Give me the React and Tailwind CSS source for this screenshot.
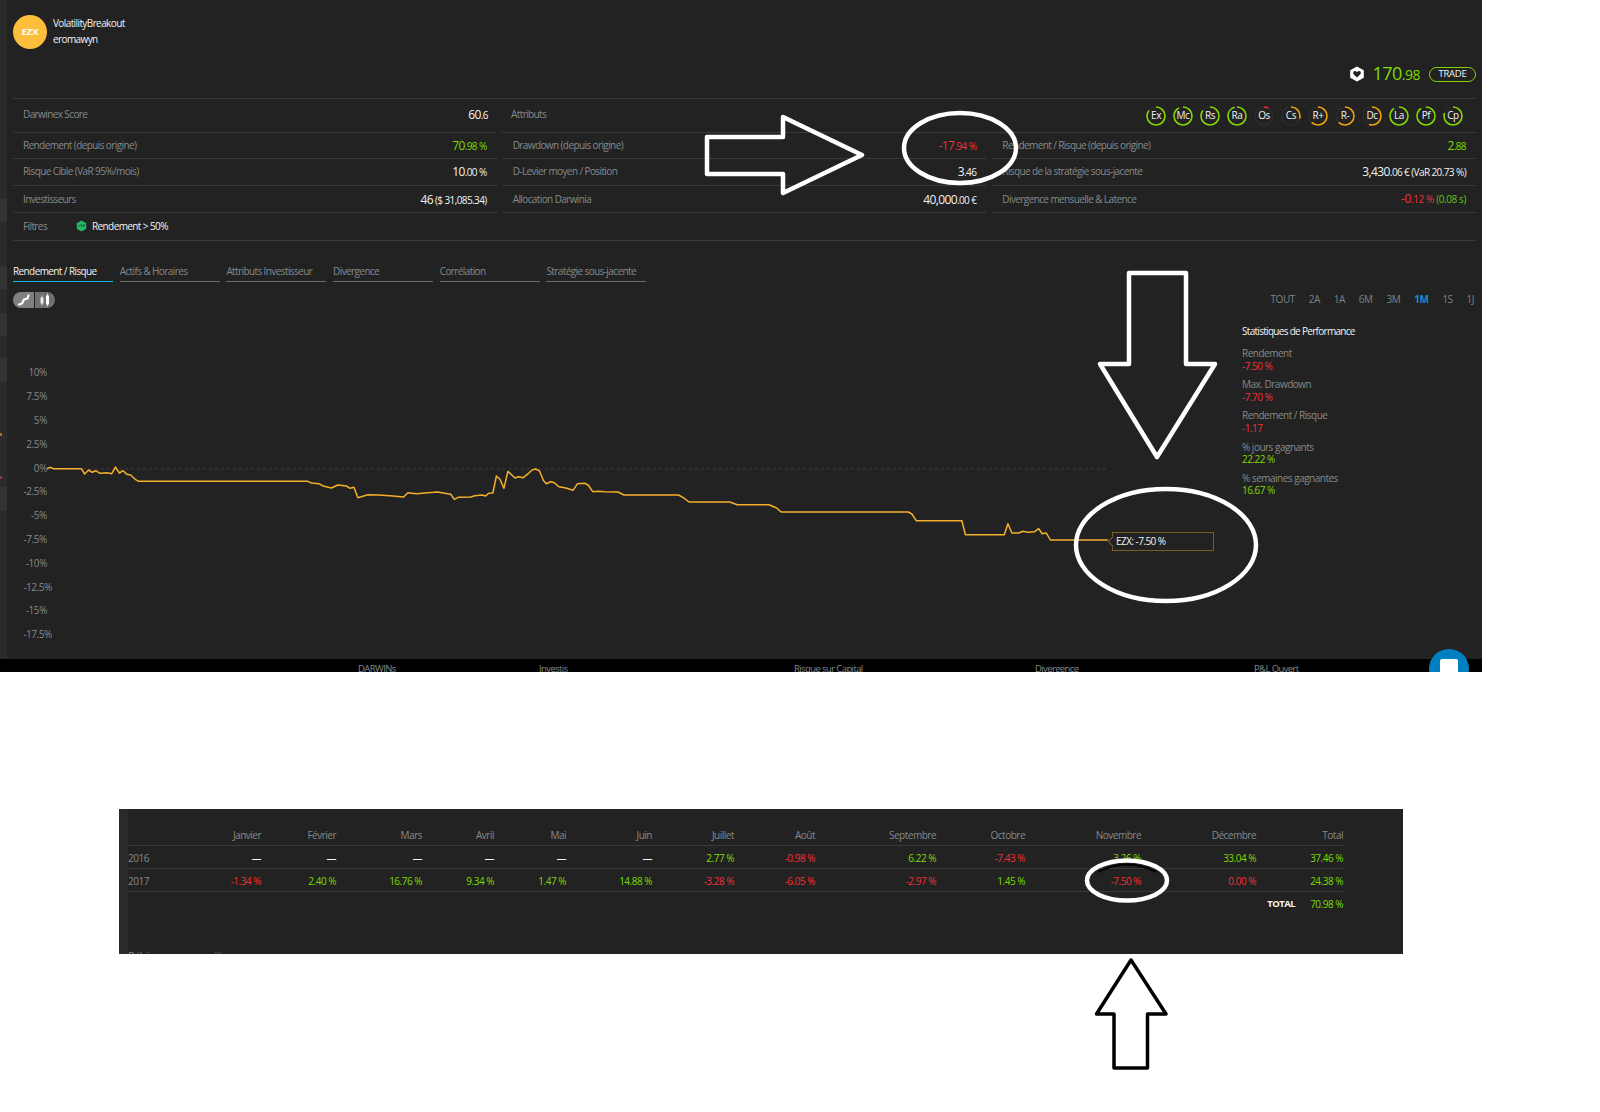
const green = 'text-[#7cdb00]';
const red = 'text-[#f33036]';

const badges = [
  ['Ex', 0.85, '#84d800'], ['Mc', 0.92, '#84d800'], ['Rs', 0.85, '#84d800'], ['Ra', 0.95, '#84d800'],
  ['Os', 0.08, '#ee2a30'], ['Cs', 0.3, '#f0a30a'], ['R+', 0.62, '#f0a30a'], ['R-', 0.62, '#f0a30a'],
  ['Dc', 0.55, '#f0a30a'], ['La', 0.9, '#84d800'], ['Pf', 0.9, '#84d800'], ['Cp', 0.8, '#84d800'],
];

const tabs = ['Rendement / Risque', 'Actifs & Horaires', 'Attributs Investisseur', 'Divergence', 'Corrélation', 'Stratégie sous-jacente'];
const ranges = ['TOUT', '2A', '1A', '6M', '3M', '1M', '1S', '1J'];
const axis = ['10%', '7.5%', '5%', '2.5%', '0%', '-2.5%', '-5%', '-7.5%', '-10%', '-12.5%', '-15%', '-17.5%'];

const stats = [
  ['Rendement', '-7.50 %', red],
  ['Max. Drawdown', '-7.70 %', red],
  ['Rendement / Risque', '-1.17', red],
  ['% jours gagnants', '22.22 %', green],
  ['% semaines gagnantes', '16.67 %', green],
];

const months = ['Janvier', 'Février', 'Mars', 'Avril', 'Mai', 'Juin', 'Juillet', 'Août', 'Septembre', 'Octobre', 'Novembre', 'Décembre', 'Total'];
const years = [
  ['2016', ['—', '—', '—', '—', '—', '—', '2.77 %', '-0.98 %', '6.22 %', '-7.43 %', '3.26 %', '33.04 %', '37.46 %']],
  ['2017', ['-1.34 %', '2.40 %', '16.76 %', '9.34 %', '1.47 %', '14.88 %', '-3.28 %', '-6.05 %', '-2.97 %', '1.45 %', '-7.50 %', '0.00 %', '24.38 %']],
];

// traced from the reference, in page pixels
const part1 = [[130,357],[140,352],[150,356],[228,356],[237,372],[248,360],[258,367],[268,362],[280,370],[300,368],[313,371],[323,351],[334,369],[345,362],[355,373],[366,375],[380,389],[388,394],[862,394],[872,399],[893,401],[905,408],[928,414],[946,405],[970,408],[980,415],[991,412],[1002,443],[1030,434],[1060,435],[1100,438],[1130,441],[1142,428],[1165,431],[1190,429],[1225,426],[1262,433],[1272,448],[1283,442],[1318,441],[1330,437],[1350,435],[1360,438],[1368,430],[1380,429],[1390,378],[1400,388],[1411,415],[1422,364],[1442,384],[1452,380],[1465,383],[1480,370],[1490,360],[1500,357],[1510,362]]
  .map(([x, y]) => [x / 2.8, 350 + y / 3]);
const part2 = [[0,127],[8,152],[14,161],[24,155],[32,158],[42,170],[58,174],[74,181],[84,161],[100,160],[108,165],[118,185],[130,184],[145,185],[175,186],[188,195],[310,195],[320,202],[334,216],[425,216],[442,224],[513,224],[530,234],[540,246],[825,246],[833,252],[843,272],[945,272],[953,314],[1040,314],[1048,281],[1057,309],[1072,309],[1082,304],[1092,307],[1108,305],[1117,296],[1125,311],[1134,309],[1143,330],[1272,330]]
  .map(([x, y]) => [540 + x / 2.24, 430 + y / 3]);
const linePoints = [...part1, ...part2].map(([x, y]) => `${x.toFixed(1)},${y.toFixed(1)}`).join(' ');

const Label = ({ children }) => <span className="text-[10px] leading-[14px] tracking-[-0.6px] text-[#858a8c]">{children}</span>;

const Val = ({ whole, rest, color = 'text-[#f2f2f2]' }) => (
  <span className={`leading-[14px] tracking-[-0.6px] ${color}`}>
    <span className="text-[12px]">{whole}</span>
    <span className="text-[10px]">{rest}</span>
  </span>
);

const Cell = ({ label, value, h }) => (
  <div className={`flex items-center justify-between border-b border-[#3a3a3a] px-[10px] ${h}`}>
    <Label>{label}</Label>
    {value}
  </div>
);

const Badge = ({ name, pct, color }) => {
  const c = 2 * Math.PI * 9;
  return (
    <div className="relative flex h-[20px] w-[20px] items-center justify-center">
      <svg viewBox="0 0 20 20" className="absolute inset-0 h-[20px] w-[20px] -rotate-90">
        <circle cx="10" cy="10" r="9" fill="none" stroke="#2e2e2e" strokeWidth="1.2" />
        <circle cx="10" cy="10" r="9" fill="none" stroke={color} strokeWidth="1.6" strokeDasharray={`${pct * c} ${c}`} />
      </svg>
      <span className="text-[10px] tracking-[-0.4px] text-[#f2f2f2]">{name}</span>
    </div>
  );
};

const valueColor = (v) => (v === '—' ? 'text-[#f2f2f2]' : v.startsWith('-') || v === '0.00 %' ? red : green);

const TableRow = ({ cells, first }) => (
  <div className="grid h-[23px] grid-cols-[60px_73px_75px_86px_72px_72px_86px_82px_81px_121px_89px_116px_115px_87px] items-center border-b border-[#3a3a3a] pt-[2px] text-[10px] tracking-[-0.5px]">
    <span className="text-[#858a8c]">{first}</span>
    {cells.map((v, i) => (
      <span key={i} className={`text-right ${valueColor(v)}`}>{v}</span>
    ))}
  </div>
);

export default function App() {
  return (
    <div className="relative h-[1112px] w-[1600px] overflow-hidden bg-white font-['Open_Sans',sans-serif]">
      {/* Top panel */}
      <div className="relative flex h-[672px] w-[1482px] flex-col overflow-hidden bg-[#222222]">
        <div className="flex h-[659px]">
          {/* Sidebar strip */}
          <div className="flex w-[7px] flex-col bg-[#2a2a2a]">
            <div className="h-[199px]" />
            <div className="h-[23px] bg-[#333333]" />
            <div className="h-[44px]" />
            <div className="h-[23px] bg-[#333333]" />
            <div className="h-[24px]" />
            <div className="h-[23px] bg-[#333333]" />
            <div className="h-[22px]" />
            <div className="h-[24px] bg-[#333333]" />
            <div className="h-[51px]" />
            <div className="h-[3px] w-[2px] bg-[#a8742a]" />
            <div className="h-[40px]" />
            <div className="h-[3px] w-[2px] bg-[#8a3a3a]" />
            <div className="h-[8px]" />
            <div className="h-[24px] bg-[#333333]" />
          </div>

          <div className="ml-[6px] flex w-[1463px] flex-col">
            {/* Header */}
            <div className="flex h-[99px] justify-between border-b border-[#3a3a3a]">
              <div className="flex items-start gap-[6px] pt-[15px]">
                <div className="flex h-[34px] w-[34px] items-center justify-center rounded-full bg-[#fdbe3c] text-[9.5px] font-bold text-white">EZX</div>
                <div className="flex flex-col text-[10px] leading-[16px] tracking-[-0.6px] text-[#f2f2f2]">
                  <span>VolatilityBreakout</span>
                  <span>eromawyn</span>
                </div>
              </div>
              <div className="mt-[66px] flex h-[16px] items-center">
                <svg viewBox="0 0 16 16" className="mr-[7px] h-[16px] w-[16px]">
                  <path d="M8 0.5 14.8 4.3 14.8 11.7 8 15.5 1.2 11.7 1.2 4.3Z" fill="#ffffff" />
                  <path d="M8 11.6 4.6 8.2C3.4 6.8 4.6 4.9 6.2 5.1 7 5.2 7.6 5.7 8 6.3 8.4 5.7 9 5.2 9.8 5.1 11.4 4.9 12.6 6.8 11.4 8.2Z" fill="#222222" />
                </svg>
                <span className={`mr-[9px] leading-[16px] tracking-[-0.5px] ${green}`}>
                  <span className="text-[18px]">170</span>
                  <span className="text-[14px]">.98</span>
                </span>
                <div className="flex h-[15px] w-[47px] items-center justify-center rounded-full border border-[#84d800] text-[9.5px] tracking-[-0.3px] text-[#f2f2f2]">TRADE</div>
              </div>
            </div>

            {/* Score row */}
            <div className="flex gap-[5px]">
              <div className="flex h-[34px] w-[483px] items-center justify-between border-b border-[#3a3a3a] pb-[3px] pl-[10px] pr-[8px]">
                <Label>Darwinex Score</Label>
                <Val whole="60" rest=".6" />
              </div>
              <div className="flex h-[34px] flex-1 items-center justify-between border-b border-[#3a3a3a] pl-[10px] pr-[13px]">
                <span className="-mt-[3px] flex"><Label>Attributs</Label></span>
                <div className="flex gap-[7px]">
                  {badges.map(([name, pct, color]) => (
                    <Badge key={name} name={name} pct={pct} color={color} />
                  ))}
                </div>
              </div>
            </div>

            {/* Metrics */}
            <div className="grid grid-cols-3 gap-x-[6px]">
              <Cell h="h-[26px] pb-[2px]" label="Rendement (depuis origine)" value={<Val whole="70" rest=".98 %" color={green} />} />
              <Cell h="h-[26px] pb-[2px]" label="Drawdown (depuis origine)" value={<Val whole="-17" rest=".94 %" color={red} />} />
              <Cell h="h-[26px] pb-[2px]" label="Rendement / Risque (depuis origine)" value={<Val whole="2" rest=".88" color={green} />} />
              <Cell h="h-[27px] pb-[2px]" label="Risque Cible (VaR 95%/mois)" value={<Val whole="10" rest=".00 %" />} />
              <Cell h="h-[27px] pb-[2px]" label="D-Levier moyen / Position" value={<Val whole="3" rest=".46" />} />
              <Cell h="h-[27px] pb-[2px]" label="Risque de la stratégie sous-jacente" value={<Val whole="3,430" rest=".06 € (VaR 20.73 %)" />} />
              <Cell h="h-[27px] pb-[1px]" label="Investisseurs" value={<Val whole="46" rest=" ($ 31,085.34)" />} />
              <Cell h="h-[27px] pb-[1px]" label="Allocation Darwinia" value={<Val whole="40,000" rest=".00 €" />} />
              <Cell
                h="h-[27px] pb-[1px]"
                label="Divergence mensuelle & Latence"
                value={
                  <span className="text-[10px] leading-[14px] tracking-[-0.4px]">
                    <span className={red}><span className="text-[12px]">-0</span>.12 %</span>{' '}
                    <span className="text-[#5fc21a]">(0.08 s)</span>
                  </span>
                }
              />
            </div>

            {/* Filters */}
            <div className="flex h-[28px] items-center border-b border-[#3a3a3a] pb-[2px] pl-[10px]">
              <div className="flex w-[53px]"><Label>Filtres</Label></div>
              <svg viewBox="0 0 12 12" className="mr-[5px] h-[12px] w-[11px]">
                <path d="M6 0 11.2 3 11.2 9 6 12 .8 9 .8 3Z" fill="#27b765" />
                <text x="6" y="7.6" textAnchor="middle" fontSize="4.4" fontWeight="700" fill="#0d5c30">&gt;50</text>
              </svg>
              <span className="text-[10px] leading-[14px] tracking-[-0.6px] text-[#f2f2f2]">Rendement &gt; 50%</span>
            </div>

            {/* Tabs */}
            <div className="mt-[22px] flex gap-[6.7px]">
              {tabs.map((t, i) => (
                <div
                  key={t}
                  className={`h-[19px] w-[100px] whitespace-nowrap border-b text-[10px] leading-[17px] tracking-[-0.6px] ${
                    i === 0 ? 'border-[#12b5ea] text-[#f2f2f2]' : 'border-[#6a6a6a] text-[#858a8c]'
                  }`}
                >
                  {t}
                </div>
              ))}
            </div>

            {/* Chart toolbar */}
            <div className="mt-[10px] flex h-[16px] items-center justify-between">
              <div className="flex h-[16px] w-[42px] overflow-hidden rounded-full">
                <div className="flex w-[21px] items-center justify-center bg-[#808080]">
                  <svg viewBox="0 0 14 12" className="h-[12px] w-[14px]">
                    <path d="M2 10.5 5 9.5 7 5.5 10.5 4.5 11.5 1.5" fill="none" stroke="#fff" strokeWidth="2.2" strokeLinecap="round" strokeLinejoin="round" />
                  </svg>
                </div>
                <div className="ml-[1px] flex flex-1 items-center justify-center bg-[#707070]">
                  <svg viewBox="0 0 14 14" className="h-[14px] w-[14px]">
                    <path d="M4 2.5V12.5M9.5 .5V13.5" stroke="#d8d8d8" strokeWidth="1" />
                    <rect x="2.5" y="4.5" width="3" height="6" fill="#e8e8e8" />
                    <rect x="8" y="2.5" width="3" height="9" fill="#ffffff" />
                  </svg>
                </div>
              </div>
              <div className="mb-[2px] mr-[2px] flex gap-[14px] text-[10px] leading-[14px] tracking-[-0.5px] text-[#7f8385]">
                {ranges.map((r) => (
                  <span key={r} className={r === '1M' ? 'font-bold text-[#0f8fd8]' : ''}>{r}</span>
                ))}
              </div>
            </div>

            {/* Chart and stats */}
            <div className="flex flex-1">
              <div className="relative flex w-[1229px]">
                <div className="mt-[53px] flex w-[34px] shrink-0 flex-col">
                  {axis.map((a) => (
                    <div
                      key={a}
                      className={`flex h-[23.8px] items-center justify-end whitespace-nowrap text-[10px] tracking-[-0.4px] text-[#858a8c] ${
                        a === '-12.5%' || a === '-17.5%' ? '-mr-[5px]' : ''
                      }`}
                    >
                      {a}
                    </div>
                  ))}
                </div>
                <svg viewBox="47 308 1173 351" className="h-[351px] w-[1173px]">
                  <line x1="47" y1="469" x2="1108" y2="469" stroke="#3c3c3c" strokeWidth="1" strokeDasharray="3 3" />
                  <polyline points={linePoints} fill="none" stroke="#f3b02c" strokeWidth="1.5" strokeLinejoin="round" />
                </svg>
                {/* Series tooltip */}
                <div className="absolute left-[1099px] top-[224px] flex h-[19px] w-[102px] items-center border border-[#7a5f25] pl-[3px] text-[10px] tracking-[-0.55px] text-[#f2f2f2]">
                  <div className="absolute -left-[4px] top-[5px] h-[7px] w-[7px] rotate-45 border-b border-l border-[#7a5f25] bg-[#222222]" />
                  <span className="relative">EZX: -7.50 %</span>
                </div>
              </div>
              <div className="flex flex-col pt-[16px]">
                <span className="mb-[8px] text-[10px] font-medium tracking-[-0.7px] text-[#f2f2f2]">Statistiques de Performance</span>
                <div className="flex flex-col gap-[6.2px]">
                  {stats.map(([k, v, c]) => (
                    <div key={k} className="flex flex-col text-[10px] leading-[12.5px] tracking-[-0.5px]">
                      <span className="text-[#858a8c]">{k}</span>
                      <span className={c}>{v}</span>
                    </div>
                  ))}
                </div>
              </div>
            </div>
          </div>
        </div>

        {/* Clipped bottom bar */}
        <div className="grid h-[13px] grid-cols-[358px_181px_255px_241px_219px_1fr] bg-black pt-[3px] text-[9.5px] leading-[14px] tracking-[-0.6px] text-[#858a8c]">
          <span />
          <span>DARWINs</span>
          <span>Investis</span>
          <span>Risque sur Capital</span>
          <span>Divergence</span>
          <span>P&amp;L Ouvert</span>
        </div>
        <div className="absolute left-[1429px] top-[649px] flex h-[40px] w-[40px] justify-center rounded-full bg-[#0080c0] pt-[10px]">
          <div className="h-[18px] w-[18px] rounded-[2px] bg-white" />
        </div>
      </div>

      {/* Monthly table panel */}
      <div className="absolute left-[119px] top-[809px] flex h-[145px] w-[1284px] overflow-hidden bg-[#222222]">
        <div className="w-[9px] shrink-0 bg-[#2a2a2a]" />
        <div className="w-[1215px] shrink-0">
          <div className="grid h-[37px] grid-cols-[60px_73px_75px_86px_72px_72px_86px_82px_81px_121px_89px_116px_115px_87px] items-end border-b border-[#3a3a3a] pb-[2px] text-[10px] tracking-[-0.5px] text-[#858a8c]">
            <span />
            {months.map((m) => (
              <span key={m} className="text-right">{m}</span>
            ))}
          </div>
          {years.map(([y, cells]) => (
            <TableRow key={y} first={y} cells={cells} />
          ))}
          <div className="flex h-[23px] items-center justify-end pt-[2px] text-[10px] tracking-[-0.5px]">
            <span className="mr-[15px] text-[9.5px] font-bold text-[#f2f2f2]">TOTAL</span>
            <span className={green}>70.98 %</span>
          </div>
          <div className="mt-[34px] text-[10px] leading-[14px] tracking-[-0.5px] text-[#858a8c]">Délai moyen par position</div>
        </div>
      </div>

      {/* Hand-drawn annotations */}
      <svg viewBox="0 0 1600 1112" className="pointer-events-none absolute inset-0 h-[1112px] w-[1600px]">
        <g fill="none" stroke="#ffffff" strokeWidth="4.5" strokeLinejoin="round">
          <polygon points="707,137 783,137 783,117 862,155 783,193 783,174 707,174" />
          <ellipse cx="960" cy="148" rx="56" ry="35" />
          <polygon points="1129,273 1186,273 1186,364 1215,364 1157,457 1100,364 1129,364" />
          <ellipse cx="1166" cy="545" rx="90" ry="56" />
          <ellipse cx="1127" cy="880.5" rx="40" ry="20" />
        </g>
        <path d="M1098 872Q1127 857 1156 872" fill="none" stroke="#000000" strokeWidth="2" />
        <polygon points="1131,960 1166,1014 1147.5,1014 1147.5,1068 1114,1068 1114,1014 1096.5,1014" fill="#ffffff" stroke="#000000" strokeWidth="3.5" strokeLinejoin="round" />
      </svg>
    </div>
  );
}
